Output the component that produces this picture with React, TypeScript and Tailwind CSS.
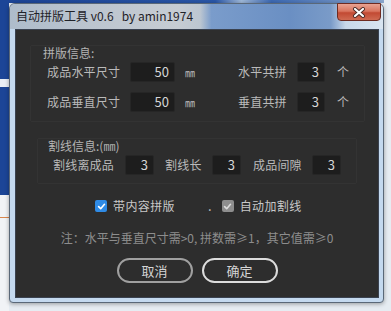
import React from "react";

const cjk = { fontFamily: '"Noto Sans CJK SC", "Noto Sans", sans-serif' };

function Field({ value, w }: { value: string; w: string }) {
  return (
    <div
      className={`${w} h-[20px] bg-[#1d1d1d] border border-[#262626] rounded-[2px] flex items-center justify-end pr-[5px] text-[13px] text-[#d6d6d6]`}
    >
      {value}
    </div>
  );
}

function Check({ color, tick }: { color: string; tick: string }) {
  return (
    <span className={`w-[12px] h-[12px] rounded-[2px] flex items-center justify-center ${color}`}>
      <svg width="9" height="9" viewBox="0 0 10 10">
        <path d="M1.8 5.2 L4.1 7.4 L8.3 2.6" fill="none" stroke={tick} strokeWidth="1.8" strokeLinecap="round" strokeLinejoin="round" />
      </svg>
    </span>
  );
}

export default function App() {
  return (
    <div className="w-[391px] h-[311px] flex bg-[#e6ecf2] overflow-hidden" style={cjk}>
      {/* desktop strip on the left */}
      <div className="w-[9px] flex flex-col">
        <div className="h-[79px] bg-[#1c4597]" />
        <div className="h-[8px] bg-[#e9eef5]" />
        <div className="h-[108px] bg-[#1c4597]" />
        <div className="h-[22px] bg-[#f1f3f6]" />
        <div className="h-[1px] bg-[#d9874e]" />
        <div className="flex-1 bg-[#f1f3f6]" />
      </div>

      <div className="w-[375px] flex flex-col">
        <div className="h-[3px] bg-[linear-gradient(to_right,#1c4597_0%,#2a57a8_55%,#9fb8d8_62%,#3d69b2_70%,#8aa6cc_100%)]" />

        {/* window */}
        <div className="relative h-[300px] flex flex-col border border-[#5a6878] rounded-t-[6px] rounded-b-[4px] bg-[#c4d9ef] shadow-[0_1px_4px_rgba(0,0,0,0.35)]">
          {/* title bar */}
          <div className="h-[25px] rounded-t-[5px] flex items-center pl-[6px] bg-[linear-gradient(to_right,#aebccb_0%,#bcc5cf_22%,#c6ccd3_45%,#bcc6d1_51%,#7a9ccb_54%,#6a8fc3_75%,#7a9bc8_86%,#c8d8ea_90%,#d9e5f1_100%)]">
            <span className="text-[12px] leading-[14px] text-[#1f2228] whitespace-pre pb-[1px]">
              自动拼版工具 v0.6   by amin1974
            </span>
          </div>

          {/* close button */}
          <div className="absolute top-[-1px] right-[2px] w-[44px] h-[18px] rounded-b-[4px] border border-[#6e2b21] bg-[linear-gradient(to_bottom,#e9a392_0%,#d9755f_45%,#c24a33_55%,#cf6a52_100%)] flex items-center justify-center">
            <svg width="14" height="11" viewBox="0 0 14 11">
              <path d="M3 2 L11 9 M11 2 L3 9" stroke="#4a2a26" strokeWidth="4" strokeLinecap="round" />
              <path d="M3 2 L11 9 M11 2 L3 9" stroke="#ffffff" strokeWidth="2.2" strokeLinecap="round" />
            </svg>
          </div>

          {/* content */}
          <div className="flex-1 ml-[5px] mr-[4px] mb-[4px] bg-[#2d2d2d] border border-[#3a4250] flex flex-col">
            {/* group 1 */}
            <div className="ml-[14px] mt-[15px] w-[335px] border border-[#333333] rounded-[2px] pb-[9px]">
              <div className="pl-[12px] h-[14px] leading-[14px] text-[12px] text-[#b4b4b4]">拼版信息:</div>
              {[
                ["成品水平尺寸", "水平共拼"],
                ["成品垂直尺寸", "垂直共拼"],
              ].map(([a, b], i) => (
                <div key={a} className={`flex items-center pl-[16px] h-[20px] ${i === 0 ? "mt-[2px]" : "mt-[10px]"}`}>
                  <span className="w-[83px] text-[12px] tracking-[0.2px] text-[#bababa]">{a}</span>
                  <Field value="50" w="w-[45px]" />
                  <span className="ml-[10px] w-[53px] text-[10px] text-[#bababa]">㎜</span>
                  <span className="w-[59px] text-[12px] tracking-[0.2px] text-[#bababa]">{b}</span>
                  <Field value="3" w="w-[28px]" />
                  <span className="ml-[12px] text-[12px] text-[#bababa]">个</span>
                </div>
              ))}
            </div>

            {/* group 2 */}
            <div className="ml-[21px] mt-[16px] w-[320px] border border-[#333333] rounded-[2px] pb-[8px]">
              <div className="pl-[10px] h-[14px] leading-[14px] text-[12px] text-[#b4b4b4]">割线信息:(㎜)</div>
              <div className="flex items-center pl-[15px] h-[20px] mt-[2px]">
                <span className="w-[72px] text-[12px] tracking-[0.2px] text-[#bababa]">割线离成品</span>
                <Field value="3" w="w-[29px]" />
                <span className="ml-[11px] w-[47px] text-[12px] tracking-[0.2px] text-[#bababa]">割线长</span>
                <Field value="3" w="w-[29px]" />
                <span className="ml-[12px] w-[59px] text-[12px] tracking-[0.2px] text-[#bababa]">成品间隙</span>
                <Field value="3" w="w-[29px]" />
              </div>
            </div>

            {/* checkboxes */}
            <div className="mt-[15px] h-[14px] flex items-center pl-[79px]">
              <Check color="bg-[#2f8be6]" tick="#ffffff" />
              <span className="ml-[6px] w-[62px] whitespace-nowrap text-[12px] tracking-[0.4px] leading-[14px] text-[#c8c8c8]">带内容拼版</span>
              <span className="ml-[33px] text-[13px] leading-[14px] text-[#c8c8c8]">.</span>
              <span className="ml-[10px]">
                <Check color="bg-[#8e8e8e]" tick="#dcdcdc" />
              </span>
              <span className="ml-[6px] whitespace-nowrap text-[12px] tracking-[0.4px] leading-[14px] text-[#c8c8c8]">自动加割线</span>
            </div>

            {/* note */}
            <div className="mt-[18px] h-[14px] leading-[14px] text-center text-[12px] text-[#8d8d8d]">
              注：水平与垂直尺寸需&gt;0, 拼数需≥1，其它值需≥0
            </div>

            {/* buttons */}
            <div className="mt-[13px] flex justify-center gap-[9px]">
              <button className="w-[76px] h-[25px] rounded-full border-2 border-[#a0a0a0] text-[13px] text-[#d4d4d4] flex items-center justify-center">
                取消
              </button>
              <button className="w-[76px] h-[25px] rounded-full border-2 border-[#dcdcdc] text-[13px] text-[#d4d4d4] flex items-center justify-center">
                确定
              </button>
            </div>
          </div>
        </div>
      </div>
    </div>
  );
}
